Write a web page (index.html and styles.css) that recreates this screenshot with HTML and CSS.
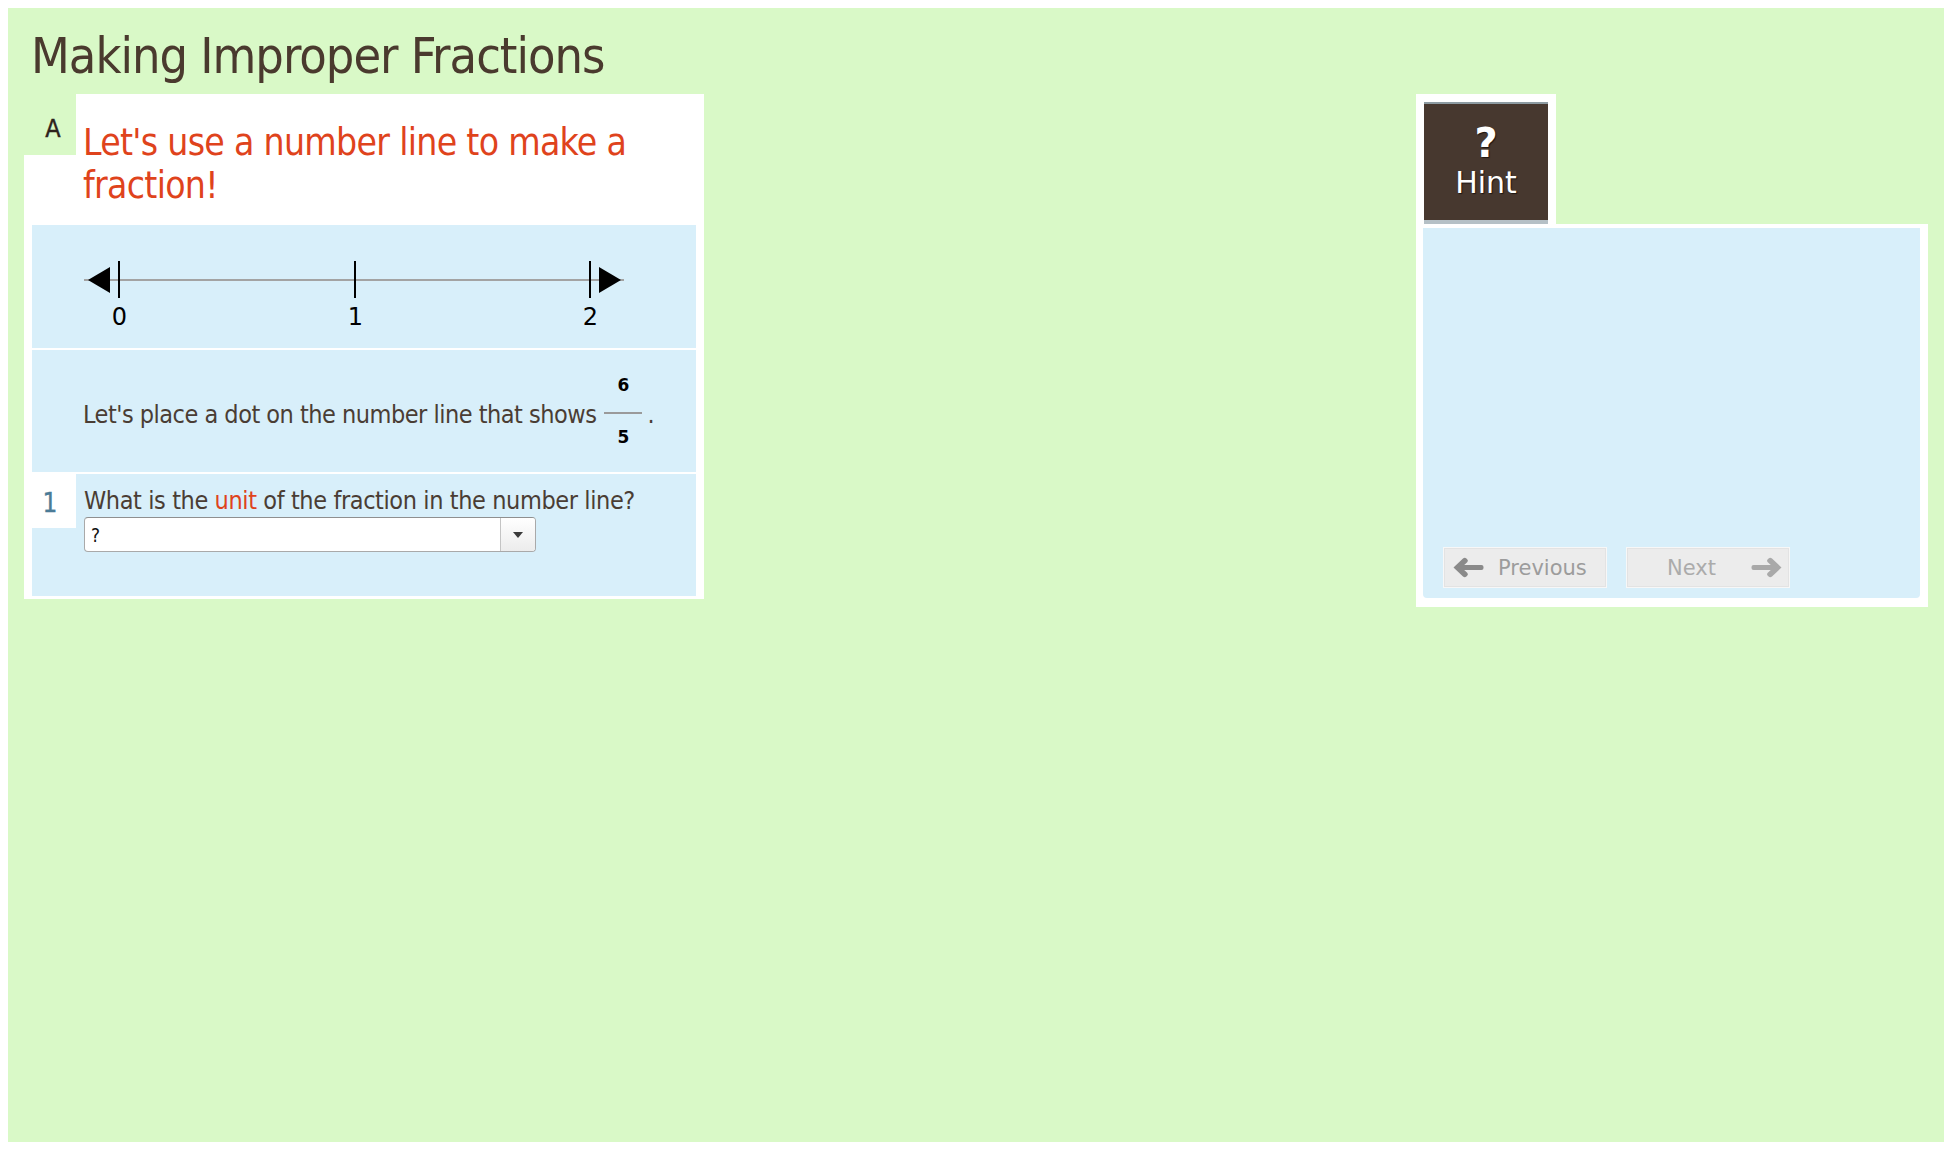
FILE: index.html
```html
<!DOCTYPE html>
<html lang="en">
<head>
<meta charset="utf-8">
<title>Making Improper Fractions</title>
<link rel="stylesheet" href="styles.css">
</head>
<body>
<div class="page">
  <h1 class="title">Making Improper Fractions</h1>
  <div class="content">
    <div class="card">
      <div class="head-row">
        <div class="label-a">A</div>
        <h2 class="heading">Let's use a number line to make a fraction!</h2>
      </div>
      <div class="panels">
        <div class="panel panel-line">
          <svg class="numline" width="664" height="123" viewBox="0 0 664 123">
            <line x1="52" y1="55" x2="592" y2="55" stroke="#a3a3a3" stroke-width="2"/>
            <polygon points="56,55 78,42 78,68" fill="#000"/>
            <polygon points="567,42 589,55 567,68" fill="#000"/>
            <line x1="87" y1="36" x2="87" y2="73" stroke="#000" stroke-width="2"/>
            <line x1="323" y1="36" x2="323" y2="73" stroke="#000" stroke-width="2"/>
            <line x1="558" y1="36" x2="558" y2="73" stroke="#000" stroke-width="2"/>
            <text x="87.5" y="100" class="nl-label" text-anchor="middle">0</text>
            <text x="323.5" y="100" class="nl-label" text-anchor="middle">1</text>
            <text x="558.5" y="100" class="nl-label" text-anchor="middle">2</text>
          </svg>
        </div>
        <div class="panel panel-sentence">
          <span class="sentence">Let's place a dot on the number line that shows</span>
          <span class="fraction">
            <span class="num">6</span>
            <span class="bar"></span>
            <span class="den">5</span>
          </span>
          <span class="period">.</span>
        </div>
        <div class="panel panel-question">
          <div class="label-1">1</div>
          <div class="question">
            <div class="q-text">What is the <span class="hl">unit</span> of the fraction in the number line?</div>
            <div class="select">
              <span class="select-value">?</span>
              <span class="select-btn"><span class="caret"></span></span>
            </div>
          </div>
        </div>
      </div>
    </div>

    <div class="hint-box">
      <div class="hint-tab">
        <div class="hint-btn">
          <span class="hint-q">?</span>
          <span class="hint-word">Hint</span>
        </div>
      </div>
      <div class="hint-body">
        <div class="hint-panel">
          <div class="nav">
            <div class="nav-btn prev">
              <svg class="arrow" width="31" height="21" viewBox="0 0 31 21"><path d="M0.5 10.5 L10 1.5 Q11.8 0 13.4 1.5 L14.2 2.3 Q15.7 3.8 14.2 5.3 L11.2 8 H28.5 Q30.5 8 30.5 10 V11 Q30.5 13 28.5 13 H11.2 L14.2 15.7 Q15.7 17.2 14.2 18.7 L13.4 19.5 Q11.8 21 10 19.5 Z" fill="#8a8a8a"/></svg>
              <span>Previous</span>
            </div>
            <div class="nav-btn next">
              <span>Next</span>
              <svg class="arrow" width="31" height="21" viewBox="0 0 31 21"><path d="M30.5 10.5 L21 1.5 Q19.2 0 17.6 1.5 L16.8 2.3 Q15.3 3.8 16.8 5.3 L19.8 8 H2.5 Q0.5 8 0.5 10 V11 Q0.5 13 2.5 13 H19.8 L16.8 15.7 Q15.3 17.2 16.8 18.7 L17.6 19.5 Q19.2 21 21 19.5 Z" fill="#a9a9a9"/></svg>
            </div>
          </div>
        </div>
      </div>
    </div>
  </div>
</div>
</body>
</html>
```

FILE: styles.css
```css
body {
  margin: 8px;
  background: #ffffff;
}

.page {
  background: #d9f9c7;
  height: 1134px;
  font-family: "DejaVu Sans Condensed", "Liberation Sans Narrow", "Liberation Sans", sans-serif;
  color: #4a3d34;
}

.title {
  margin: 0;
  padding: 16px 0 0 23px;
  font-size: 50px;
  letter-spacing: -1px;
  line-height: 64px;
  font-weight: normal;
  color: #4a3a2e;
}

.content {
  display: flex;
  justify-content: space-between;
  align-items: flex-start;
  padding: 6px 16px 0 16px;
}

/* Left card */
.card {
  width: 680px;
  background: #ffffff;
}

.head-row {
  display: flex;
  align-items: flex-start;
}

.label-a {
  width: 46px;
  height: 55px;
  padding: 6px 0 0 6px;
  background: #d9f9c7;
  text-align: center;
  font-size: 25px;
  line-height: 57px;
  color: #2e231c;
  -webkit-text-stroke: 0.4px #2e231c;
}

.heading {
  flex: 1;
  margin: 0;
  padding: 27px 20px 18px 7px;
  font-size: 37px;
  letter-spacing: -0.7px;
  line-height: 43px;
  font-weight: normal;
  color: #df431c;
}

.panels {
  display: flex;
  flex-direction: column;
  gap: 2px;
  padding: 0 8px 3px 8px;
}

.panel {
  background: #d8effa;
}

.panel-line {
  height: 123px;
}

.numline {
  display: block;
}

.nl-label {
  font-family: "DejaVu Sans", sans-serif;
  font-size: 24px;
  fill: #000;
}

.panel-sentence {
  height: 122px;
  display: flex;
  align-items: center;
  padding-left: 51px;
  font-size: 25px;
  letter-spacing: -0.5px;
}

.sentence {
  line-height: 32px;
  margin-top: 8px;
}

.fraction {
  display: inline-flex;
  flex-direction: column;
  align-items: center;
  width: 38px;
  margin-left: 8px;
  font-family: "DejaVu Sans", sans-serif;
  font-weight: bold;
  font-size: 17px;
  line-height: 20px;
  letter-spacing: 0;
  color: #000;
}

.fraction .bar {
  display: block;
  width: 38px;
  height: 2px;
  background: #9a9a9a;
  margin: 17px 0 13px 0;
}

.period {
  line-height: 32px;
  margin: 8px 0 0 5px;
}

.panel-question {
  height: 122px;
  display: flex;
  align-items: flex-start;
}

.label-1 {
  width: 52px;
  height: 50px;
  margin-left: -8px;
  padding-top: 4px;
  background: #ffffff;
  text-align: center;
  font-size: 26px;
  line-height: 50px;
  color: #4b7b97;
  -webkit-text-stroke: 0.3px #4b7b97;
}

.question {
  padding: 10px 0 0 8px;
}

.q-text {
  font-size: 25px;
  letter-spacing: -0.4px;
  line-height: 33px;
}

.hl {
  color: #df431c;
}

.select {
  display: flex;
  width: 450px;
  height: 33px;
  border: 1px solid #a9a9a9;
  border-top-color: #8f8f8f;
  border-radius: 4px;
  background: #ffffff;
  overflow: hidden;
}

.select-value {
  flex: 1;
  padding-left: 6px;
  font-size: 19px;
  line-height: 35px;
  color: #111;
}

.select-btn {
  width: 34px;
  border-left: 1px solid #c4c4c4;
  background: linear-gradient(#ffffff, #ececec);
  display: flex;
  align-items: center;
  justify-content: center;
}

.caret {
  width: 0;
  height: 0;
  border-left: 5px solid transparent;
  border-right: 5px solid transparent;
  border-top: 6px solid #3a3a3a;
}

/* Hint box */
.hint-box {
  width: 512px;
  font-family: "DejaVu Sans", sans-serif;
}

.hint-tab {
  width: 124px;
  padding: 8px 8px 0 8px;
  background: #ffffff;
}

.hint-btn {
  box-sizing: border-box;
  height: 122px;
  border-top: 2px solid #8d9ba2;
  border-bottom: 4px solid #b5c0c6;
  background: #47382f;
  color: #ffffff;
  display: flex;
  flex-direction: column;
  align-items: center;
  padding-top: 19px;
  text-shadow: 1px 1px 1px #1e1612;
}

.hint-q {
  font-size: 40px;
  line-height: 40px;
  font-weight: bold;
}

.hint-word {
  font-size: 30px;
  line-height: 36px;
  margin-top: 2px;
}

.hint-body {
  background: #ffffff;
  padding: 4px 8px 9px 7px;
}

.hint-panel {
  height: 370px;
  background: #d8effa;
  border-radius: 0 0 4px 4px;
  display: flex;
  align-items: flex-end;
  padding: 0 0 11px 21px;
  box-sizing: border-box;
}

.nav {
  display: flex;
  gap: 21px;
}

.nav-btn {
  height: 39px;
  width: 162px;
  box-sizing: border-box;
  border: 1px solid #e3e3e3;
  outline: 1px solid #f7f7f7;
  background: #ececec;
  display: flex;
  align-items: center;
  font-size: 21px;
  color: #9c9c9c;
}

.nav-btn.prev {
  padding-left: 8px;
  gap: 14px;
}

.nav-btn.next {
  justify-content: space-between;
  padding: 0 6px 0 39px;
  color: #ababab;
}

.arrow {
  display: block;
}
```
